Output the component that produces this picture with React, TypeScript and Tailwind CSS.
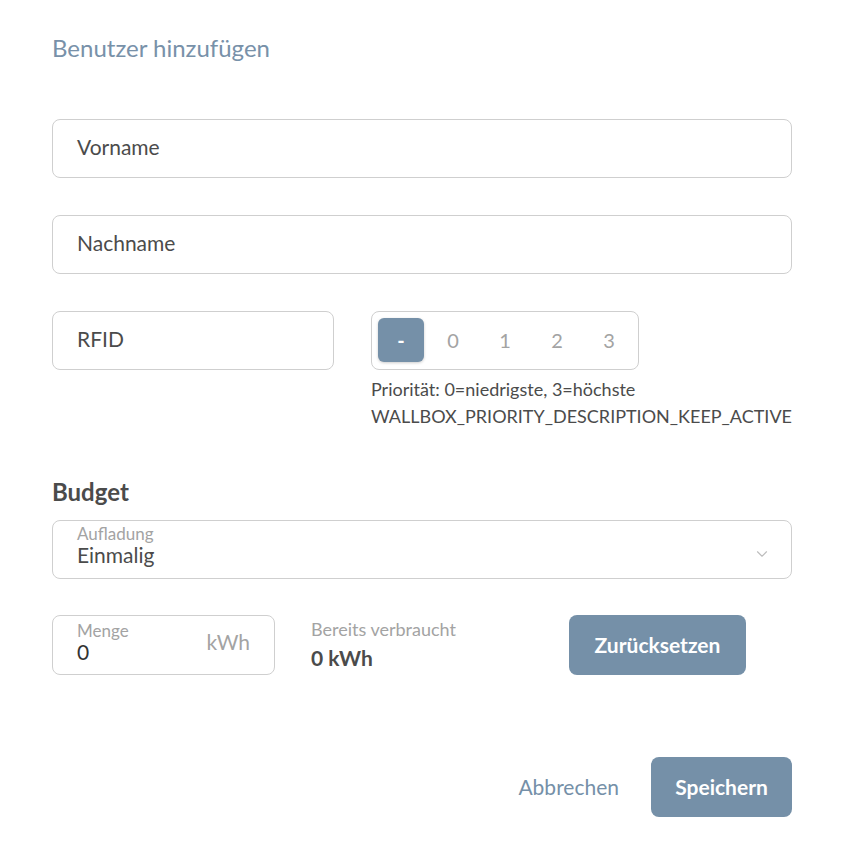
import { ChevronDown } from "lucide-react";

const PRIORITIES = ["-", "0", "1", "2", "3"];

function TextField({ label, className = "" }: { label: string; className?: string }) {
  return (
    <div
      className={`h-[59px] rounded-lg border border-[#cfcfcf] flex items-center px-6 pb-[4px] text-[21px] text-[#4b4b4b] ${className}`}
    >
      {label}
    </div>
  );
}

export default function App() {
  return (
    <div className="w-[848px] h-[857px] bg-white font-['Lato',sans-serif] px-[52px] pt-[34px]">
      <h1 className="text-[24px] text-[#7891a9] leading-7">Benutzer hinzufügen</h1>

      <div className="mt-[57px] flex flex-col gap-[37px] w-[740px]">
        <TextField label="Vorname" />
        <TextField label="Nachname" />

        <div className="flex items-start gap-[37px]">
          <TextField label="RFID" className="w-[284px]" />
          <div>
            <div className="h-[59px] w-[268px] rounded-lg border border-[#cfcfcf] flex items-center px-[6px] pb-[2px] gap-[6px]">
              {PRIORITIES.map((p, i) => (
                <div
                  key={p}
                  className={
                    i === 0
                      ? "w-[46px] h-[44px] rounded-md bg-[#7590a8] text-white text-[20px] font-bold flex items-center justify-center shadow-[0_1px_3px_rgba(0,0,0,0.2)]"
                      : "w-[46px] h-[44px] flex items-center justify-center text-[20px] text-[#a3a3a3]"
                  }
                >
                  {p}
                </div>
              ))}
            </div>
            <p className="mt-[6px] text-[18px] leading-[27px] text-[#4b4b4b]">
              Priorität: 0=niedrigste, 3=höchste
            </p>
            <p className="text-[18px] leading-[27px] text-[#4b4b4b]">
              WALLBOX_PRIORITY_DESCRIPTION_KEEP_ACTIVE
            </p>
          </div>
        </div>
      </div>

      <h2 className="mt-[48px] text-[24px] font-bold text-[#4b4b4b] leading-7">Budget</h2>

      <div className="mt-[14px] w-[740px] h-[59px] rounded-lg border border-[#cfcfcf] flex items-start justify-between pl-6 pr-5 pt-[4px]">
        <div className="flex flex-col">
          <span className="text-[17px] leading-[18px] text-[#a3a3a3]">Aufladung</span>
          <span className="text-[21px] leading-[24px] text-[#4b4b4b]">Einmalig</span>
        </div>
        <ChevronDown className="mt-[20px] w-[18px] h-[18px] text-[#bdbdbd]" strokeWidth={1.5} />
      </div>

      <div className="mt-[36px] flex items-start">
        <div className="w-[223px] h-[60px] rounded-lg border border-[#cfcfcf] flex items-start justify-between pl-6 pr-6 pt-[6px]">
          <div className="flex flex-col">
            <span className="text-[17px] leading-[18px] text-[#a3a3a3]">Menge</span>
            <span className="text-[21px] leading-[24px] text-[#333333]">0</span>
          </div>
          <span className="mt-[8px] text-[21px] leading-[24px] text-[#a3a3a3]">kWh</span>
        </div>
        <div className="ml-[36px] pt-[3px] flex flex-col w-[258px]">
          <span className="text-[18px] leading-[22px] text-[#a3a3a3]">Bereits verbraucht</span>
          <span className="mt-[6px] text-[21px] leading-[24px] font-bold text-[#4b4b4b]">0 kWh</span>
        </div>
        <button className="w-[177px] h-[60px] rounded-lg bg-[#7590a8] text-white text-[21px] font-bold">
          Zurücksetzen
        </button>
      </div>

      <div className="mt-[82px] w-[740px] flex justify-end items-center gap-8">
        <button className="text-[21px] text-[#7590a8]">Abbrechen</button>
        <button className="w-[141px] h-[60px] rounded-lg bg-[#7590a8] text-white text-[21px] font-bold">
          Speichern
        </button>
      </div>
    </div>
  );
}
